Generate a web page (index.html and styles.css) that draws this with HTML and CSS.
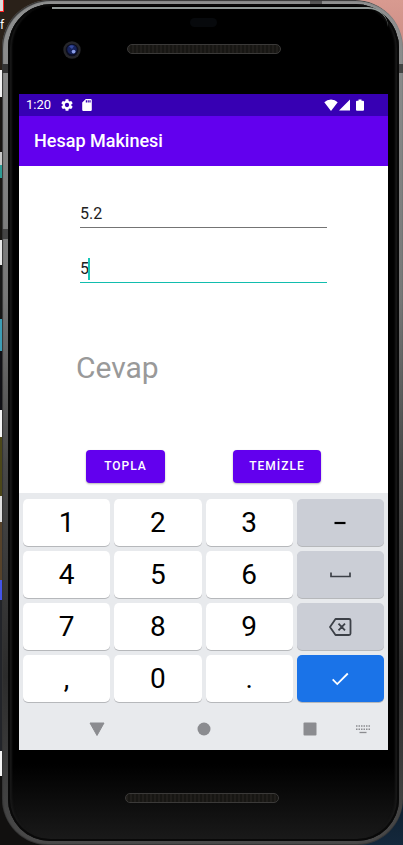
FILE: index.html
```html
<!DOCTYPE html>
<html lang="tr">
<head>
<meta charset="utf-8">
<meta name="viewport" content="width=device-width, initial-scale=1">
<title>Hesap Makinesi</title>
<link rel="stylesheet" href="styles.css">
</head>
<body>
<span class="desktop-letter">f</span>
<div class="phone">
  <div class="body">
    <div class="forehead">
      <span class="sensor"></span>
      <svg class="camera" viewBox="0 0 18 18">
        <circle cx="9" cy="9" r="8.7" fill="#26262a"/>
        <circle cx="9" cy="9" r="6.3" fill="#0b0d20"/>
        <circle cx="9" cy="8.5" r="4.8" fill="#17235c"/>
        <path d="M6 5.5a4 4 0 0 1 5-.5L9 8z" fill="#35499a"/>
        <circle cx="10.6" cy="10.6" r="1.9" fill="#8c9ee8"/>
      </svg>
      <span class="speaker"></span>
    </div>

    <div class="screen">
      <div class="status">
        <span class="time">1:20</span>
        <svg class="gear" viewBox="2 2 20 20"><path fill="#fff" d="M19.14 12.94c.04-.3.06-.61.06-.94 0-.32-.02-.64-.07-.94l2.03-1.58a.49.49 0 0 0 .12-.61l-1.92-3.32a.49.49 0 0 0-.59-.22l-2.39.96c-.5-.38-1.03-.7-1.62-.94l-.36-2.54a.48.48 0 0 0-.48-.41h-3.84c-.24 0-.43.17-.47.41l-.36 2.54c-.59.24-1.13.57-1.62.94l-2.39-.96a.49.49 0 0 0-.59.22L2.74 8.87c-.12.21-.08.47.12.61l2.03 1.58c-.05.3-.09.63-.09.94s.02.64.07.94l-2.03 1.58a.49.49 0 0 0-.12.61l1.92 3.32c.12.22.37.29.59.22l2.39-.96c.5.38 1.03.7 1.62.94l.36 2.54c.05.24.24.41.48.41h3.84c.24 0 .44-.17.47-.41l.36-2.54c.59-.24 1.13-.56 1.62-.94l2.39.96c.22.08.47 0 .59-.22l1.92-3.32a.49.49 0 0 0-.12-.61zM12 15.6A3.6 3.6 0 1 1 12 8.400a3.600 3.600 0 0 1 0 7.200z"/></svg>
        <svg class="sd" viewBox="4 2 16 20"><path fill="#fff" d="M18 2h-8L4 8v12a2 2 0 0 0 2 2h12a2 2 0 0 0 2-2V4a2 2 0 0 0-2-2zm-6 6h-2V4h2zm3 0h-2V4h2zm3 0h-2V4h2z"/></svg>
        <svg class="signals" viewBox="0 0 40 12">
          <path fill="#fff" d="M7 12 .3 3.200Q3 .5 7 .5t6.700 2.700zM26 .5V11.500H15zM33 1.800h1.500V.5h3v1.300H39q1 0 1 1v8q0 1-1 1h-6q-1 0-1-1v-8q0-1 1-1z"/>
        </svg>
      </div>
      <header class="appbar"><h1>Hesap Makinesi</h1></header>

      <main class="calc">
        <div class="field">
          <input type="text" inputmode="decimal" aria-label="Birinci sayı" value="5.2">
        </div>
        <div class="field active">
          <input type="text" inputmode="decimal" aria-label="İkinci sayı" value="5">
          <span class="caret"></span>
        </div>
        <output class="answer">Cevap</output>
        <div class="actions">
          <button type="button" class="add">TOPLA</button>
          <button type="button" class="clear">TEMİZLE</button>
        </div>
      </main>

      <div class="keyboard">
        <button type="button">1</button>
        <button type="button">2</button>
        <button type="button">3</button>
        <button type="button" class="fn" aria-label="Eksi"><svg viewBox="0 0 24 24"><path d="M6.500 12h11" stroke="#000" stroke-width="2.200"/></svg></button>
        <button type="button">4</button>
        <button type="button">5</button>
        <button type="button">6</button>
        <button type="button" class="fn" aria-label="Boşluk"><svg viewBox="0 0 24 24"><path d="M3 9.500V13.500H22V9.500" fill="none" stroke="#3c4047" stroke-width="1.700"/></svg></button>
        <button type="button">7</button>
        <button type="button">8</button>
        <button type="button">9</button>
        <button type="button" class="fn" aria-label="Sil"><svg viewBox="0 0 24 24"><path d="M7 4H20.500Q22 4 22 5.500V18.500Q22 20 20.500 20H7L1.500 12zM10 8.700l6.500 6.600M16.500 8.700l-6.500 6.600" fill="none" stroke="#3c4047" stroke-width="1.800" stroke-linejoin="round" transform="translate(.5 0)"/></svg></button>
        <button type="button">,</button>
        <button type="button">0</button>
        <button type="button">.</button>
        <button type="button" class="done" aria-label="Tamam"><svg viewBox="0 0 24 24"><path d="M4 12.500l5 5L20.500 6" fill="none" stroke="#fff" stroke-width="2"/></svg></button>
      </div>

      <nav class="navbar">
        <button type="button" aria-label="Geri"><svg viewBox="0 0 16 16"><path d="M1 2h14L8 14.500z" fill="#8b8c90" stroke="#8b8c90" stroke-linejoin="round"/></svg></button>
        <button type="button" aria-label="Ana ekran"><svg viewBox="0 0 16 16"><circle cx="8" cy="8" r="6.500" fill="#8b8c90"/></svg></button>
        <button type="button" aria-label="Son uygulamalar"><svg viewBox="0 0 16 16"><rect x="1.500" y="1.500" width="13" height="13" rx="1" fill="#8b8c90"/></svg></button>
        <button type="button" aria-label="Klavye seç"><svg viewBox="0 0 16 16"><path d="M1 5h14M1 8.200h14" stroke="#8b8c90" stroke-width="1.500" stroke-dasharray="1.500 1"/><path d="M4.500 11.500h7" stroke="#8b8c90" stroke-width="1.300"/></svg></button>
      </nav>
    </div>

    <div class="chin"><span class="speaker"></span></div>
  </div>
</div>
</body>
</html>
```
FILE: styles.css
```css
* { box-sizing: border-box; }

body {
  margin: 0;
  padding-left: 2px;
  font-family: Roboto, "Noto Sans", sans-serif;
  position: relative;
  overflow-x: hidden;
  background:
    linear-gradient(#ff2020, #ff2020) 3px 0 / 1px 12px no-repeat,
    linear-gradient(#ff2020, #ff2020) 0 11px / 4px 1px no-repeat,
    linear-gradient(#ddd, #ddd) 0 0 / 3px 11px no-repeat,
    linear-gradient(#d89a90, #c98a83) right top / 50% 60px no-repeat,
    linear-gradient(#0c1c2b, #14283c) right bottom / 50% 60px no-repeat,
    linear-gradient(#2a2119 70px, #f2f2f2 70px 97px, #171411 97px 152px,
      #c9c9c9 152px 165px, #2c9b94 165px 178px, #191714 178px 240px, #e8e8e8 240px 265px,
      #171717 265px 319px, #3c9db5 319px 351px, #101015 351px 410px, #f5f5f5 410px 437px,
      #4b4618 437px 496px, #e0e0e0 496px 522px, #56422a 522px 580px, #4354e8 580px 600px,
      #222429 600px 751px, #f5f5f5 751px 776px, #11100f 776px);
}

.desktop-letter {
  position: absolute;
  left: 0;
  top: 17px;
  color: #fff;
  font-size: 12px;
  line-height: 16px;
}

.phone {
  position: relative;
  padding: 4px 4px 4px 6px;
  border-radius: 48px 48px 46px 46px;
  overflow: hidden;
  background:
    linear-gradient(#333, #333) 0 64px / 6px 9px no-repeat,
    linear-gradient(#444, #444) 0 229px / 6px 10px no-repeat,
    linear-gradient(#444, #444) right 64px / 4px 9px no-repeat,
    linear-gradient(#555, #555) 308px 0 / 12px 4px no-repeat,
    linear-gradient(#8f9090, #777 35%, #484848 55%, #2c2c2c 80%, #4a4a4a);
  box-shadow: inset 1px 1px 1px #333, inset 0 -1px 1px #333;
}

.body {
  position: relative;
  padding: 0 11px;
  border-radius: 44px 44px 42px 42px;
  background: linear-gradient(#000 760px, #1a1a1a);
  box-shadow: inset 0 0 0 2px #090909, inset 5px 0 2px -1px #181818, inset -5px 0 2px -1px #181818;
}

.body::before {
  content: "";
  position: absolute;
  top: 3px;
  left: 44px;
  right: 11px;
  height: 18px;
  border-top: 2px solid #929a98;
  border-radius: 0 32px 0 0;
}

.forehead {
  position: relative;
  height: 90px;
}

.sensor {
  position: absolute;
  top: 14px;
  left: calc(50% - 14px);
  width: 27px;
  height: 9px;
  border-radius: 5px;
  background: #07090c;
}

.camera {
  position: absolute;
  top: 37px;
  left: 55px;
  margin-left: -11px;
  width: 18px;
  height: 18px;
}

.speaker {
  display: block;
  width: 154px;
  height: 10px;
  margin: 0 auto;
  border: 1px solid #3b3a39;
  border-radius: 5px;
  background: repeating-linear-gradient(90deg, #201e1b 0 2px, #171613 2px 4px);
}

.forehead .speaker {
  position: relative;
  top: 40px;
}

.screen { background: #fff; }

.status {
  display: flex;
  align-items: center;
  height: 22px;
  padding: 0 24px 0 7px;
  background: #3700b3;
  color: #fff;
}

.time {
  margin-right: 10px;
  font-size: 13px;
  line-height: 22px;
}

.gear { width: 12px; height: 12px; margin-right: 9px; }
.sd { width: 10px; height: 12px; }
.signals { width: 40px; height: 12px; margin-left: auto; }

.appbar {
  padding: 12px 15px;
  background: #6200ee;
  color: #fff;
}

h1 {
  margin: 0;
  font-size: 18px;
  font-weight: 500;
  line-height: 26px;
}

.calc { padding: 34px 61px 10px; }

.field {
  position: relative;
  margin-bottom: 27px;
}

.field input {
  display: block;
  width: 100%;
  height: 28px;
  padding: 0;
  border: 0;
  border-bottom: 1px solid #747474;
  border-radius: 0;
  outline: 0;
  background: none;
  color: #212121;
  font: 16px/27px Roboto, sans-serif;
}

.field.active input { border-bottom: 1px solid #12bdae; }

.caret {
  position: absolute;
  top: 3px;
  left: 8px;
  width: 2px;
  height: 22px;
  background: #16c7b8;
}

.answer {
  display: block;
  margin: 66px 0 63px -4px;
  color: #999;
  font-size: 30px;
  line-height: 38px;
}

.actions {
  display: flex;
  justify-content: space-between;
  padding: 0 6px;
}

.actions button {
  height: 33px;
  padding: 0;
  border: 0;
  border-radius: 4px;
  background: #6200ee;
  box-shadow: 0 1px 2px rgba(0, 0, 0, .3);
  color: #fff;
  font: 500 12px/33px Roboto, sans-serif;
  letter-spacing: 1px;
}

.actions .add { width: 79px; }
.actions .clear { width: 88px; }

.keyboard {
  display: grid;
  grid-template-columns: repeat(4, 1fr);
  gap: 5px 4px;
  padding: 6px 4px;
  background: #e8eaed;
}

.keyboard button {
  display: flex;
  align-items: center;
  justify-content: center;
  height: 47px;
  padding: 0;
  border: 0;
  border-radius: 5px;
  background: #fff;
  box-shadow: 0 1px 0 #b6b8bb;
  color: #000;
  font: 28px/47px Roboto, sans-serif;
}

.keyboard .fn { background: #cbced6; }
.keyboard .done { background: #1a73e8; }
.keyboard svg { width: 24px; height: 24px; }
.keyboard .done svg { width: 22px; height: 22px; }

.navbar {
  display: grid;
  grid-template-columns: 107fr 107fr 53fr 16px;
  align-items: center;
  height: 42px;
  padding: 0 17px 0 70px;
  background: #e8eaed;
}

.navbar button {
  display: flex;
  padding: 0;
  border: 0;
  background: none;
}

.navbar svg { width: 16px; height: 16px; }

.chin {
  height: 91px;
  padding: 43px 4px 0 0;
}
```
